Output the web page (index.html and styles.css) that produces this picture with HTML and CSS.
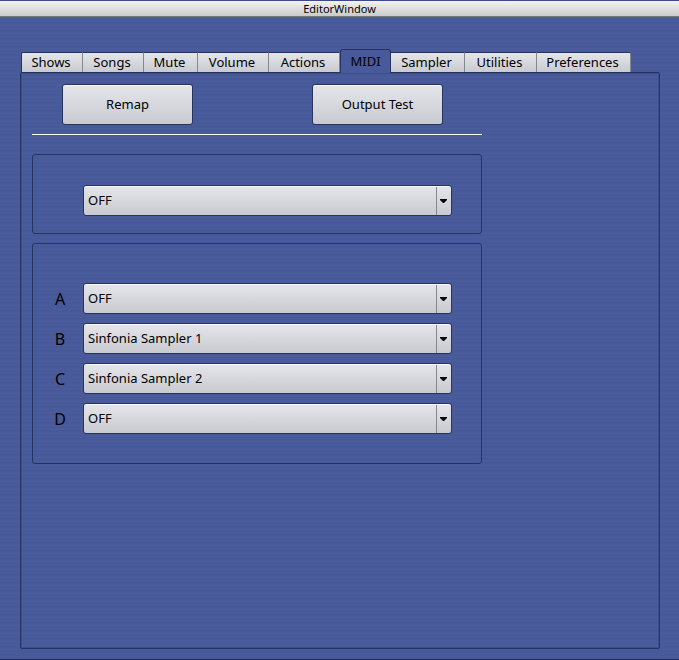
FILE: index.html
```html
<!DOCTYPE html>
<html lang="en">
<head>
<meta charset="utf-8">
<meta name="viewport" content="width=device-width, initial-scale=1">
<title>EditorWindow</title>
<link rel="stylesheet" href="styles.css">
</head>
<body>
<header class="titlebar"><h1 class="title">EditorWindow</h1></header>
<main class="window">
  <div class="tabs" role="tablist">
    <button class="tab" type="button" role="tab">Shows</button>
    <button class="tab" type="button" role="tab">Songs</button>
    <button class="tab" type="button" role="tab">Mute</button>
    <button class="tab" type="button" role="tab">Volume</button>
    <button class="tab" type="button" role="tab">Actions</button>
    <button class="tab active" type="button" role="tab" id="tab-midi" aria-selected="true" aria-controls="midi">MIDI</button>
    <button class="tab" type="button" role="tab">Sampler</button>
    <button class="tab" type="button" role="tab">Utilities</button>
    <button class="tab" type="button" role="tab">Preferences</button>
  </div>
  <section class="panel" id="midi" role="tabpanel" aria-labelledby="tab-midi">
    <div class="content">
      <div class="actions">
        <button class="push" type="button">Remap</button>
        <button class="push" type="button">Output Test</button>
      </div>
      <hr class="rule">
      <div class="group single">
        <div class="row">
          <span class="letter"></span>
          <div class="combo">
            <select class="select" aria-label="MIDI device"><option>OFF</option></select>
            <svg class="arrow" viewBox="0 0 7 4" aria-hidden="true"><path d="M0 0h7v1L4 4H3L0 1z"/></svg>
          </div>
        </div>
      </div>
      <div class="group ports">
        <div class="row">
          <label class="letter" for="port-a">A</label>
          <div class="combo">
            <select class="select" id="port-a"><option>OFF</option></select>
            <svg class="arrow" viewBox="0 0 7 4" aria-hidden="true"><path d="M0 0h7v1L4 4H3L0 1z"/></svg>
          </div>
        </div>
        <div class="row">
          <label class="letter" for="port-b">B</label>
          <div class="combo">
            <select class="select" id="port-b"><option>Sinfonia Sampler 1</option></select>
            <svg class="arrow" viewBox="0 0 7 4" aria-hidden="true"><path d="M0 0h7v1L4 4H3L0 1z"/></svg>
          </div>
        </div>
        <div class="row">
          <label class="letter" for="port-c">C</label>
          <div class="combo">
            <select class="select" id="port-c"><option>Sinfonia Sampler 2</option></select>
            <svg class="arrow" viewBox="0 0 7 4" aria-hidden="true"><path d="M0 0h7v1L4 4H3L0 1z"/></svg>
          </div>
        </div>
        <div class="row">
          <label class="letter" for="port-d">D</label>
          <div class="combo">
            <select class="select" id="port-d"><option>OFF</option></select>
            <svg class="arrow" viewBox="0 0 7 4" aria-hidden="true"><path d="M0 0h7v1L4 4H3L0 1z"/></svg>
          </div>
        </div>
      </div>
    </div>
  </section>
</main>
</body>
</html>
```
FILE: styles.css
```css
:root {
  --edge: #27345f;
  --metal: linear-gradient(#e5e6eb, #c9cacf);
}

* { box-sizing: border-box; }

body {
  margin: 0;
  min-height: 100vh;
  display: flex;
  flex-direction: column;
  font: 13px/18px "Noto Sans", "Open Sans", sans-serif;
  color: #000;
  background: repeating-linear-gradient(#495b9b 0 2px, #475999 2px 4px);
  border-top: 1px solid #3c4a85;
  border-bottom: 1px solid #1d2a55;
}

button, select { font: inherit; color: inherit; }

.titlebar {
  height: 16px;
  background: linear-gradient(#f2f2f2, #cbcbcb);
  border-bottom: 1px solid #777;
  text-align: center;
}

.title {
  margin: 0;
  font-size: 11px;
  font-weight: 400;
  line-height: 15px;
}

.window {
  flex: 1;
  display: flex;
  flex-direction: column;
  padding: 32px 19px 10px 20px;
}

.tabs {
  display: grid;
  grid-template-columns: 62fr 61fr 54fr 71fr 71fr 51fr 74fr 72fr 94fr;
  align-items: end;
  max-width: 611px;
  padding-left: 1px;
}

.tab {
  height: 20px;
  padding: 0 2px 2px 0;
  border: 0;
  border-top: 1px solid var(--edge);
  border-right: 1px solid #85878f;
  background: var(--metal);
}

.tab:first-child {
  border-left: 1px solid var(--edge);
  border-top-left-radius: 2px;
}

.tab:last-child { border-top-right-radius: 2px; }

.tab.active {
  height: 24px;
  margin-bottom: -1px;
  padding: 0 0 2px;
  border: 1px solid var(--edge);
  border-bottom: 0;
  border-radius: 3px 3px 0 0;
  background: #485a9a;
  z-index: 1;
}

.panel {
  flex: 1;
  padding: 11px;
  border: 1px solid var(--edge);
  border-radius: 2px;
  box-shadow: inset 0 0 0 1px #3e4e8a;
}

.content { max-width: 450px; }

.actions {
  display: flex;
  justify-content: space-between;
  padding: 0 39px 0 30px;
}

.push {
  width: 131px;
  height: 41px;
  padding: 0 0 2px;
  border: 1px solid var(--edge);
  border-radius: 3px;
  background: var(--metal);
  box-shadow: inset 0 1px #f8f8fb;
}

.rule {
  margin: 9px 0 19px;
  border: 0;
  border-bottom: 1px solid #fff;
}

.group {
  border: 1px solid var(--edge);
  border-radius: 3px;
  padding: 0 29px 0 16px;
}

.single { padding-top: 30px; padding-bottom: 17px; }

.ports {
  display: grid;
  gap: 9px;
  margin-top: 9px;
  padding-top: 39px;
  padding-bottom: 29px;
}

.row { display: flex; align-items: center; }

.letter {
  width: 34px;
  padding-right: 12px;
  font-size: 16px;
  line-height: 20px;
  text-align: center;
}

.combo { position: relative; flex: 1; }

.select {
  display: block;
  width: 100%;
  height: 31px;
  padding: 0 20px 2px 4px;
  appearance: none;
  border: 1px solid var(--edge);
  border-radius: 3px;
  background: linear-gradient(#85878f, #85878f) right 14px top / 1px 100% no-repeat, var(--metal);
  box-shadow: inset 0 1px #f8f8fb;
}

.arrow {
  position: absolute;
  right: 5px;
  top: 14px;
  width: 7px;
  height: 4px;
  pointer-events: none;
}
```
